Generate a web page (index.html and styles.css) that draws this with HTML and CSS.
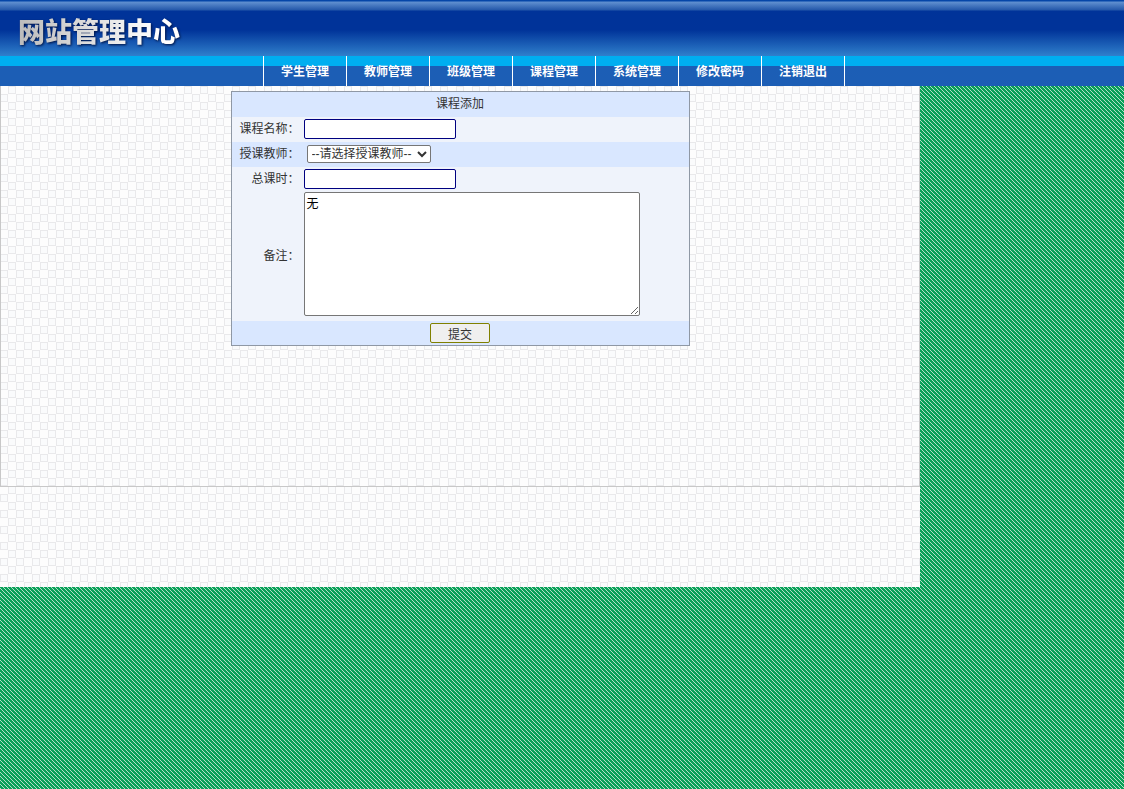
FILE: index.html
```html
<!DOCTYPE html>
<html lang="zh-CN">
<head>
<meta charset="utf-8">
<title>网站管理中心</title>
<link rel="stylesheet" href="styles.css">
</head>
<body>
<header class="banner"><h1 class="title">网站管理中心</h1></header>
<nav class="menu">
<a href="#">学生管理</a>
<a href="#">教师管理</a>
<a href="#">班级管理</a>
<a href="#">课程管理</a>
<a href="#">系统管理</a>
<a href="#">修改密码</a>
<a href="#">注销退出</a>
</nav>
<main class="page">
<section class="content">
<form class="course">
<h2 class="row heading">课程添加</h2>
<div class="row"><label for="name">课程名称：</label><input class="field" id="name" type="text"></div>
<div class="row tint"><label for="teacher">授课教师：</label><select class="picker" id="teacher"><option>--请选择授课教师--</option></select></div>
<div class="row"><label for="hours">总课时：</label><input class="field" id="hours" type="text"></div>
<div class="row notes"><label for="notes">备注：</label><textarea id="notes">无</textarea></div>
<div class="row actions"><button type="submit">提交</button></div>
</form>
</section>
</main>
</body>
</html>
```
FILE: styles.css
```css
* { box-sizing: border-box; }
body {
  margin: 0;
  min-height: 100vh;
  font: 12px/20px "Liberation Sans", "Noto Sans CJK SC", sans-serif;
  color: #333;
  background: url("data:image/svg+xml,%3Csvg xmlns='http://www.w3.org/2000/svg' width='4' height='4' shape-rendering='crispEdges'%3E%3Crect width='4' height='4' fill='%2309a058'/%3E%3Cpath fill='%23b2dfc8' d='M0 0h1v1H0zM1 1h1v1H1zM2 2h1v1H2zM3 3h1v1H3z'/%3E%3C/svg%3E");
}
.banner {
  height: 56px;
  padding: 11px 18px 0;
  background: linear-gradient(#0546a8 0 1px, #6090d0 2px, #2458aa 10px, #003399 11px, #003399 30px, #3080cc 56px);
}
.title {
  margin: 0;
  font: 900 27px/40px "Noto Sans CJK SC", sans-serif;
  color: transparent;
  background: linear-gradient(90deg, #bbb, #fff 140px);
  background-clip: text;
  width: max-content;
  filter: drop-shadow(1px 1px 1px #001545);
}
.menu {
  display: flex;
  height: 30px;
  padding-left: 263px;
  background: linear-gradient(#00aef0 10px, #1c5eb5 10px);
}
.menu a {
  width: 83px;
  border-left: 1px solid #fff;
  color: #fff;
  font-weight: bold;
  line-height: 32px;
  text-align: center;
  text-decoration: none;
}
.menu a:last-child { width: 84px; border-right: 1px solid #fff; }
.page, .content {
  background: #fdfdfd url("data:image/svg+xml,%3Csvg xmlns='http://www.w3.org/2000/svg' width='16' height='16' shape-rendering='crispEdges'%3E%3Cpath fill='%23e9e9eb' d='M8 0h8v8H8zM0 8h8v8H0z'/%3E%3Cpath fill='%23fafbfc' d='M9 1h6v6H9zM1 9h6v6H1z'/%3E%3C/svg%3E");
}
.page { width: 920px; max-width: 100%; padding-bottom: 100px; }
.content {
  min-height: 401px;
  padding-top: 5px;
  border: solid #c8c8c8;
  border-width: 0 1px 1px;
  background-origin: border-box;
}
.course {
  width: 459px;
  max-width: 100%;
  margin: 0 auto;
  border: 1px solid #8f98a5;
  background: #eff3fb;
}
.row { display: flex; align-items: center; height: 25px; padding-bottom: 1px; }
.row label { width: 68px; margin-right: 4px; text-align: right; }
.heading { justify-content: center; margin: 0; font: inherit; background: #d9e7ff; }
.tint, .actions { background: #d9e7ff; }
.field {
  width: 152px;
  height: 20px;
  padding: 1px 2px;
  border: 1px solid #000080;
  border-radius: 2px;
  font: inherit;
  background: #fff;
}
.picker {
  height: 18px;
  width: 124px;
  margin-left: 3px;
  padding: 0;
  border: 1px solid #767676;
  border-radius: 2px;
  font: inherit;
  line-height: 16px;
  color: #333;
  background: #fff;
}
.notes { height: 129px; }
.notes textarea {
  align-self: flex-start;
  width: 336px;
  height: 124px;
  padding: 2px;
  border: 1px solid #767676;
  border-radius: 2px;
  font: inherit;
  line-height: 18px;
  color: #000;
}
.actions { justify-content: center; height: 24px; padding-bottom: 0; }
.actions button {
  width: 60px;
  height: 20px;
  padding: 4px 0 0;
  border: 1px solid #808000;
  border-radius: 2px;
  font: inherit;
  line-height: 15px;
  color: #333;
  background: #efefef;
}
```
